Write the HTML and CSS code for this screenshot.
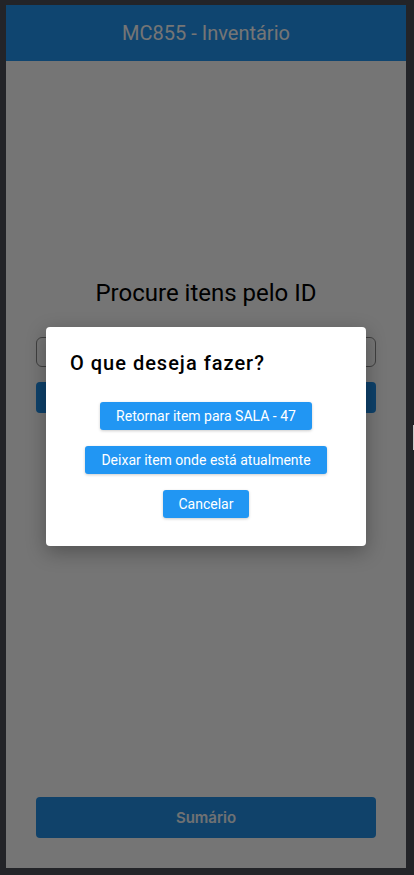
FILE: index.html
```html
<!DOCTYPE html>
<html lang="pt">
<head>
<meta charset="utf-8">
<title>MC855 - Inventário</title>
<link rel="stylesheet" href="styles.css">
</head>
<body>
<div class="frame">
  <div class="screen">
    <header class="appbar">MC855 - Inventário</header>
    <main class="content">
      <h1 class="search-title">Procure itens pelo ID</h1>
      <div class="field"></div>
      <button class="btn-primary"></button>
      <button class="btn-summary">Sumário</button>
    </main>
    <div class="overlay">
      <div class="dialog">
        <h2 class="dialog-title">O que deseja fazer?</h2>
        <div class="dialog-actions">
          <button class="btn-action">Retornar item para SALA - 47</button>
          <button class="btn-action">Deixar item onde está atualmente</button>
          <button class="btn-action">Cancelar</button>
        </div>
      </div>
    </div>
  </div>
  <div class="side-tab"></div>
</div>
</body>
</html>
```
FILE: styles.css
```css
html, body {
  margin: 0;
  padding: 0;
  background: #232428;
}
.frame {
  position: relative;
  width: 414px;
  height: 875px;
  overflow: hidden;
}
.screen {
  position: relative;
  margin: 5px 8px 7px 6px;
  width: 400px;
  height: 863px;
  background: #ffffff;
  display: flex;
  flex-direction: column;
  font-family: Roboto, "Noto Sans", sans-serif;
  overflow: hidden;
}
.appbar {
  height: 56px;
  flex: none;
  background: #2196f3;
  color: #ffffff;
  font-size: 20px;
  display: flex;
  align-items: center;
  justify-content: center;
}
.content {
  flex: 1;
  display: flex;
  flex-direction: column;
  padding: 218px 30px 30px;
}
.search-title {
  margin: 0;
  font-size: 24px;
  line-height: 28px;
  font-weight: 400;
  text-align: center;
  color: #000;
}
.field {
  margin-top: 30px;
  height: 28px;
  border: 1px solid #8a8a8a;
  border-radius: 6px;
}
.btn-primary {
  margin-top: 15px;
  height: 31px;
  border: none;
  border-radius: 4px;
  background: #1f8ee6;
}
.btn-summary {
  margin-top: auto;
  height: 41px;
  border: none;
  border-radius: 4px;
  background: #2391e8;
  color: #f2f6fa;
  font-family: Inter, "Noto Sans", sans-serif;
  font-size: 15px;
  font-weight: 600;
}
.overlay {
  position: absolute;
  inset: 0;
  background: rgba(0, 0, 0, 0.54);
  display: flex;
  align-items: center;
  justify-content: center;
}
.dialog {
  width: 320px;
  box-sizing: border-box;
  background: #ffffff;
  border-radius: 4px;
  padding: 24px 24px 28px;
  box-shadow: 0 6px 20px rgba(0, 0, 0, 0.3);
}
.dialog-title {
  margin: 0;
  font-size: 20px;
  line-height: 24px;
  font-weight: 500;
  letter-spacing: 1px;
  color: #000;
}
.dialog-actions {
  margin-top: 27px;
  display: flex;
  flex-direction: column;
  align-items: center;
  gap: 16px;
}
.btn-action {
  height: 28px;
  padding: 0 16px;
  border: none;
  border-radius: 3px;
  background: #2196f3;
  color: #ffffff;
  font-family: Roboto, "Noto Sans", sans-serif;
  font-size: 14px;
  box-shadow: 0 1px 3px rgba(0, 0, 0, 0.2);
}
.side-tab {
  position: absolute;
  left: 413px;
  top: 425px;
  width: 1px;
  height: 25px;
  background: #c8c8c8;
}
```
